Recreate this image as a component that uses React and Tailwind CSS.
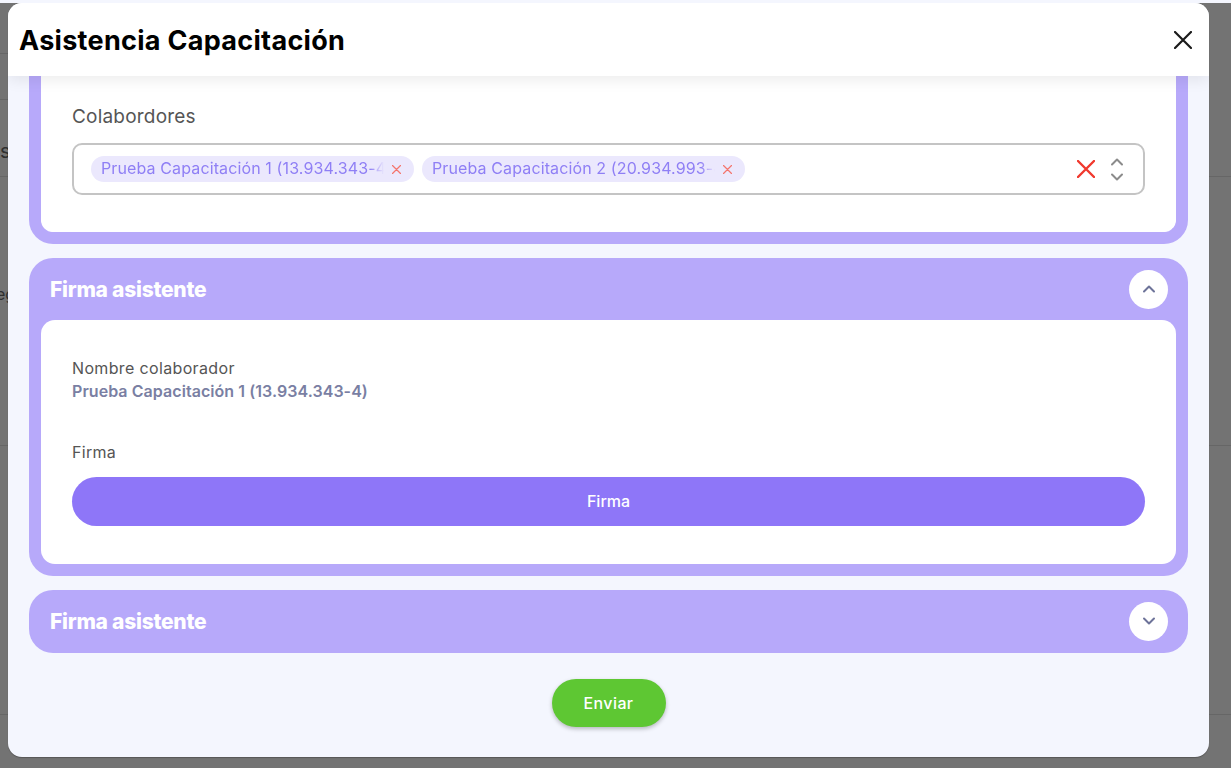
import { ChevronDown, ChevronUp } from 'lucide-react';

function Cross({ size = 18, width = 2, className = '' }) {
  return (
    <svg width={size} height={size} viewBox="0 0 18 18" fill="none" stroke="currentColor" strokeWidth={width} strokeLinecap="round" className={className}>
      <path d="M1 1 17 17M17 1 1 17" />
    </svg>
  );
}

function Chip({ label }) {
  return (
    <div className="flex h-[26px] w-[323px] items-center rounded-full bg-[#ebe8fd] pl-[10px]">
      <span className="mb-[2px] w-[283px] overflow-hidden whitespace-nowrap text-[16px] leading-[24px] tracking-[0.12px] text-[#8f7ff5] [mask-image:linear-gradient(to_right,black_95%,transparent)]">
        {label}
      </span>
      <Cross size={9} width={2.4} className="ml-[8px] text-[#f4766e]" />
    </div>
  );
}

function SectionHeader({ open }) {
  return (
    <div className="flex h-[62px] items-center justify-between pl-[21px] pr-[20px]">
      <h3 className="text-[21px] font-extrabold leading-none tracking-[-0.25px] text-white">Firma asistente</h3>
      <button className="flex h-[39px] w-[39px] items-center justify-center rounded-full bg-white text-[#6d7399]">
        {open ? <ChevronUp size={20} strokeWidth={2.4} /> : <ChevronDown size={20} strokeWidth={2.4} />}
      </button>
    </div>
  );
}

export default function App() {
  return (
    <div className="relative h-[768px] w-[1231px] overflow-hidden bg-[#737373] font-['Inter',sans-serif]">
      {/* restos de la pagina detras del modal */}
      <div className="absolute left-0 top-[53px] h-px w-[8px] bg-[#666666]" />
      <div className="absolute left-0 top-[99px] h-px w-[8px] bg-[#666666]" />
      <div className="absolute left-0 top-[176px] h-px w-full bg-[#666666]" />
      <div className="absolute left-0 top-[445px] h-px w-full bg-[#666666]" />
      <div className="absolute left-0 top-[714px] h-px w-full bg-[#666666]" />
      <span className="absolute left-0 top-[136px] text-[20px] text-[#2f2f2f]">s</span>
      <span className="absolute left-[-4px] top-[282px] w-[12px] overflow-hidden text-[16px] text-[#2f2f2f]">eg</span>
      <div className="absolute inset-x-0 top-0 h-[3px] bg-[#f4f6fe]" />

      <div className="relative ml-[8px] mt-[3px] flex h-[754px] w-[1201px] flex-col overflow-hidden rounded-[14px] bg-[#f4f6fe] shadow-[0_1px_1px_rgba(0,0,0,0.25)]">
        <header className="relative z-10 flex h-[73px] shrink-0 items-center justify-between bg-white pl-[11px] pr-[17px] shadow-[0_4px_14px_rgba(0,0,0,0.08)]">
          <h2 className="mt-[2px] text-[27px] font-bold leading-none tracking-[0.3px] text-black">Asistencia Capacitación</h2>
          <Cross size={18} width={2.2} className="text-[#1a1a1a]" />
        </header>

        <div className="flex flex-col px-[21px]">
          <section className="h-[168px] rounded-b-[24px] border-x-[12px] border-b-[12px] border-[#b7a9fa] bg-white">
            <div className="h-full rounded-b-[14px] bg-white px-[31px] pt-[28px]">
              <label className="block text-[19px] leading-[26px] tracking-[0.2px] text-[#555555]">Colabordores</label>
              <div className="mt-[13px] flex h-[52px] items-center rounded-[10px] border-2 border-[#c4c4c4] pl-[17px] pr-[16px]">
                <div className="flex flex-1 gap-[8px]">
                  <Chip label="Prueba Capacitación 1 (13.934.343-4)" />
                  <Chip label="Prueba Capacitación 2 (20.934.993-4)" />
                </div>
                <Cross size={18} width={2.4} className="text-[#f0392e]" />
                <div className="ml-[12px] flex flex-col text-[#8b8b8b]">
                  <ChevronUp size={20} strokeWidth={2.4} className="-mb-[5px]" />
                  <ChevronDown size={20} strokeWidth={2.4} />
                </div>
              </div>
            </div>
          </section>

          <section className="mt-[14px] h-[318px] rounded-[24px] bg-[#b7a9fa]">
            <SectionHeader open />
            <div className="mx-[12px] h-[244px] rounded-[14px] bg-white px-[31px] pt-[37px]">
              <p className="text-[16px] leading-[22px] tracking-[0.35px] text-[#555555]">Nombre colaborador</p>
              <p className="mt-[2px] text-[16px] font-semibold leading-[21px] tracking-[0.06px] text-[#7a7fa3]">Prueba Capacitación 1 (13.934.343-4)</p>
              <p className="mt-[39px] text-[16px] leading-[22px] tracking-[0.3px] text-[#555555]">Firma</p>
              <button className="mt-[14px] h-[49px] w-full rounded-full bg-[#8e76f8] pb-[2px] text-[16px] font-medium text-white">Firma</button>
            </div>
          </section>

          <section className="mt-[14px] h-[63px] rounded-[24px] bg-[#b7a9fa]">
            <SectionHeader />
          </section>

          <button className="mx-auto mt-[26px] h-[48px] w-[114px] rounded-[24px] bg-[#5ec733] text-[16px] font-medium tracking-[0.4px] text-white shadow-[0_2px_4px_rgba(0,0,0,0.25)]">Enviar</button>
        </div>
      </div>
    </div>
  );
}
